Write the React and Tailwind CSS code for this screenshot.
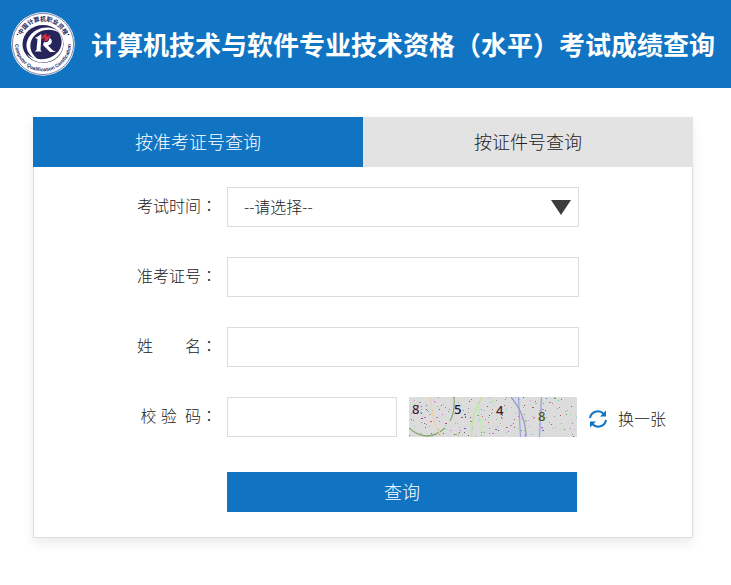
import React, { useState } from 'react';

const NOISE_COLORS = ['#d9383f', '#3f9c4c', '#3c55c9', '#9c6bb0', '#df7fd0', '#4b3b3b', '#45c9bd', '#b8925a', '#5fe35f', '#8c8c9c', '#e23ad6', '#a03060'];

// small seeded generator so the captcha noise stays the same between renders
const makeNoise = (count) => {
  let seed = 8548;
  const next = () => {
    seed = (seed * 16807) % 2147483647;
    return seed / 2147483647;
  };
  return Array.from({ length: count }, () => ({
    x: Math.floor(next() * 168),
    y: Math.floor(next() * 40),
    w: next() > 0.85 ? 2 : 1,
    color: NOISE_COLORS[Math.floor(next() * NOISE_COLORS.length)],
  }));
};

const noise = makeNoise(210);

const Logo = () => (
  <svg viewBox="0 0 64 64" className="h-16 w-16 shrink-0" role="img" aria-label="中国计算机职业资格">
    <defs>
      <path id="ringTop" d="M 9 32 A 23 23 0 0 1 55 32" />
      <path id="ringBottom" d="M 4.2 28 A 28 28 0 1 0 59.8 28" />
    </defs>
    <circle cx="32" cy="32" r="31.7" fill="#ffffff" />
    <circle cx="32" cy="32" r="30.6" fill="none" stroke="#30306b" strokeWidth="0.6" />
    <ellipse cx="32" cy="32" rx="20.5" ry="19" fill="#25255c" />
    <text fill="#25255c" className="font-['Noto_Sans_CJK_SC',sans-serif] text-[6px] font-bold">
      <textPath href="#ringTop" startOffset="50%" textAnchor="middle">中国计算机职业资格</textPath>
    </text>
    <text fill="#25255c" className="font-['Liberation_Sans',sans-serif] text-[5px] font-bold">
      <textPath href="#ringBottom" startOffset="50%" textAnchor="middle">Computer Qualification Certification</textPath>
    </text>
    <circle cx="6.5" cy="22.5" r="0.8" fill="#25255c" />
    <circle cx="57.5" cy="22.5" r="0.8" fill="#25255c" />
    <path d="M50 22 C42 12 25 14 18 25 C12 35 17 45 30 50 C20 43 17 35 21 27 C27 17 41 15 50 22 Z" fill="#ffffff" />
    <path d="M46 18 C54 28 51 39 42 44 C34 49 22 48 16 42 C22 52 36 53 45 46 C55 38 54 26 46 18 Z" fill="#ffffff" />
    <path d="M24 26 C26 25 28 24 29.500 22.500 L30.500 22.500 L29.500 38 L31 39.500 L23.500 39.500 L25.500 38 L26.500 27 Z" fill="#ffffff" />
    <path d="M33 30 C36 31 38.500 29 38.500 26 C42.500 28 41 32.500 37 33.500 L42 38.500 L45 40 L39 40 L32 33 Z" fill="#ffffff" />
    <path d="M31 27 C31 24 33 22 36 22 L35 24.500 L40 23 L36.500 28.500 L33 29.500 L34 25.500 Z" fill="#e02b3c" />
  </svg>
);

const Captcha = () => (
  <svg viewBox="0 0 168 40" className="h-10 w-[168px] shrink-0 bg-[#dcdcdc]" role="img" aria-label="8548">
    <g shapeRendering="crispEdges">
      {noise.map((dot, i) => (
        <rect key={i} x={dot.x} y={dot.y} width={dot.w} height="1" fill={dot.color} opacity="0.8" />
      ))}
    </g>
    <g fill="none" strokeWidth="1.2">
      <path d="M0 31 Q18 47 36 31" stroke="#87a66b" />
      <path d="M22 0 Q22 25 33 39" stroke="#f6cda2" />
      <path d="M45 0 Q46 16 41 24" stroke="#87a66b" />
      <path d="M73 0 Q61 20 63 40" stroke="#b6ec8c" />
      <path d="M70 7 Q70 26 75 40" stroke="#b9efaa" />
      <path d="M109.500 0 L111.500 40" stroke="#98a4e2" />
      <path d="M102 0 Q117 18 117 40" stroke="#929bc6" />
      <path d="M132.500 0 L130.500 40" stroke="#98a4e2" />
    </g>
    <g className="font-['Noto_Sans',sans-serif] text-[13px] font-medium">
      <text x="3" y="17" fill="#4c1c3c">8</text>
      <text x="45" y="17" fill="#15154c">5</text>
      <text x="87" y="18" fill="#43202b">4</text>
      <text x="129" y="24" fill="#485a17">8</text>
    </g>
  </svg>
);

const RefreshIcon = () => (
  <svg viewBox="0 0 20 20" className="h-5 w-5 shrink-0" fill="none" stroke="#1174c2" strokeWidth="2">
    <path d="M2 9 A8 8 0 0 1 15.500 4.700" />
    <path d="M18 11 A8 8 0 0 1 4.500 15.300" />
    <path d="M18 1.500 V7.500 H12 Z" fill="#1174c2" stroke="none" />
    <path d="M2 18.500 V12.500 H8 Z" fill="#1174c2" stroke="none" />
  </svg>
);

// full-width punctuation sits in the middle of its cell in the TC face
const Mark = ({ children }) => (
  <span className="font-['Noto_Sans_CJK_TC',sans-serif]">{children}</span>
);

const Field = ({ id, label, children }) => (
  <div className="flex items-center">
    <label htmlFor={id} className="mr-2.5 w-[183px] shrink-0 pb-1 text-right whitespace-pre">
      {label}<Mark>：</Mark>
    </label>
    {children}
  </div>
);

const inputClass = 'h-10 min-w-0 border border-[#dcdcdc] bg-white px-4 outline-none focus:border-[#1174c2]';

const App = () => {
  const [tab, setTab] = useState('ticket');

  const tabClass = (name) =>
    `h-[50px] flex-1 text-lg ${tab === name ? 'bg-[#1174c2] text-white' : 'bg-[#e3e3e3]'}`;

  return (
    <div className="font-['Open_Sans','Noto_Sans_CJK_SC',sans-serif] text-base font-light text-[#222222]">
      <header className="flex h-[88px] items-center gap-4 bg-[#1174c2] pl-[11px]">
        <Logo />
        <h1 className="text-[26px] font-bold whitespace-nowrap text-white">
          计算机技术与软件专业技术资格<Mark>（</Mark>水平<Mark>）</Mark>考试成绩查询
        </h1>
      </header>

      <main className="pt-[29px] pr-[38px] pb-10 pl-[33px]">
        <div className="shadow-[0_5px_10px_rgba(0,0,0,0.08)]">
          <div role="tablist" className="flex">
            <button type="button" role="tab" aria-selected={tab === 'ticket'} className={tabClass('ticket')} onClick={() => setTab('ticket')}>
              按准考证号查询
            </button>
            <button type="button" role="tab" aria-selected={tab === 'idcard'} className={tabClass('idcard')} onClick={() => setTab('idcard')}>
              按证件号查询
            </button>
          </div>

          <form className="border-x border-b border-[#dcdcdc] pt-5 pb-[25px]" onSubmit={(e) => e.preventDefault()}>
            <div className="flex flex-col gap-[30px]">
              <Field id="examTime" label="考试时间">
                <div className="relative mr-[113px] flex min-w-0 flex-1">
                  <select id="examTime" className={`${inputClass} flex-1 appearance-none`}>
                    <option>--请选择--</option>
                  </select>
                  <svg viewBox="0 0 20 15" className="pointer-events-none absolute top-[13px] right-2 h-[15px] w-5">
                    <path d="M0 0 H20 L10 15 Z" fill="#3c3c3c" />
                  </svg>
                </div>
              </Field>
              <Field id="ticketNo" label="准考证号">
                <input id="ticketNo" type="text" className={`${inputClass} mr-[113px] flex-1`} />
              </Field>
              <Field id="fullName" label={'姓\u3000\u3000名'}>
                <input id="fullName" type="text" className={`${inputClass} mr-[113px] flex-1`} />
              </Field>
              <Field id="verifyCode" label="校 验  码">
                <input id="verifyCode" type="text" className={`${inputClass} mr-3 w-[170px]`} />
                <Captcha />
                <button type="button" className="ml-[11px] flex items-center gap-2.5 pt-1 whitespace-nowrap">
                  <RefreshIcon />
                  换一张
                </button>
              </Field>
            </div>
            <div className="mt-[35px] mr-[115px] ml-[193px] flex">
              <button type="submit" className="h-10 flex-1 bg-[#1174c2] text-lg text-white">查询</button>
            </div>
          </form>
        </div>
      </main>
    </div>
  );
};

export default App;
